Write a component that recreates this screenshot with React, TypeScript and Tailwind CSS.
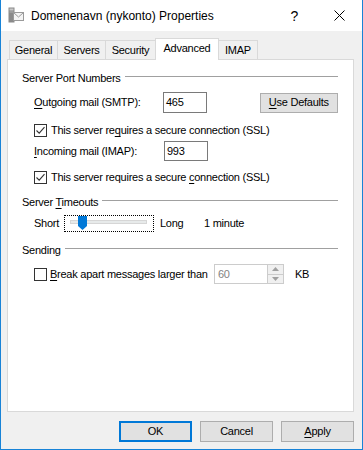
import type { ReactNode } from 'react'

const font = "font-['Liberation_Sans',Arial,sans-serif]"

function U({ children }: { children: ReactNode }) {
  return <span className="underline underline-offset-[2px] decoration-1">{children}</span>
}

function Check({ checked }: { checked: boolean }) {
  return (
    <span className="flex h-[13px] w-[13px] shrink-0 items-center justify-center border border-[#333333] bg-white">
      {checked && (
        <svg width="11" height="11" viewBox="0 0 11 11">
          <path d="M1.5 5.5 L4.2 8.2 L9.5 2.2" fill="none" stroke="#333333" strokeWidth="1.1" />
        </svg>
      )}
    </span>
  )
}

function Heading({ children }: { children: ReactNode }) {
  return (
    <div className="flex h-[16px] items-start">
      <span className="whitespace-nowrap leading-[16px]">{children}</span>
      <span className="ml-[4px] mt-[6px] h-px flex-1 bg-[#a0a0a0]" />
    </div>
  )
}

function WinButton({ children, primary }: { children: ReactNode; primary?: boolean }) {
  return (
    <button
      type="button"
      className={[
        'flex h-[21px] w-[73px] items-center justify-center bg-[#e1e1e1] leading-none',
        primary ? 'border-2 border-[#0078d7]' : 'border border-[#adadad]',
      ].join(' ')}
    >
      {children}
    </button>
  )
}

function AppIcon() {
  return (
    <svg width="17" height="17" viewBox="0 0 17 17">
      <rect x="0.5" y="0.5" width="6" height="15" fill="#8a8a8a" />
      <rect x="1.5" y="1.5" width="4" height="2" fill="#c8c8c8" />
      <rect x="1.5" y="4.5" width="4" height="1" fill="#b0b0b0" />
      <rect x="5.5" y="5.5" width="10" height="8" fill="#f4f4f4" stroke="#9a9a9a" />
      <path d="M5.5 5.5 L10.5 10 L15.5 5.5" fill="none" stroke="#9a9a9a" />
    </svg>
  )
}

export default function App() {
  const tabs = [
    { label: 'General', w: 'w-[49px]' },
    { label: 'Servers', w: 'w-[49px]' },
    { label: 'Security', w: 'w-[51px]' },
    { label: 'Advanced', w: 'w-[64px]', active: true },
    { label: 'IMAP', w: 'w-[40px]' },
  ]

  return (
    <div className={`${font} flex h-[450px] w-[363px] flex-col border-x border-b border-[#1883d7] bg-[#f0f0f0] text-[11px] tracking-[-0.25px] text-black`}>
      <div className="flex h-[31px] shrink-0 items-center bg-white">
        <span className="ml-[7px]">
          <AppIcon />
        </span>
        <span className="ml-[6px] text-[12px] tracking-normal">Domenenavn (nykonto) Properties</span>
        <span className="ml-auto mr-[36px] text-[14px] leading-none">?</span>
        <svg className="mr-[17px]" width="11" height="11" viewBox="0 0 11 11">
          <path d="M0.5 0.5 L10.5 10.5 M10.5 0.5 L0.5 10.5" stroke="#000" strokeWidth="1" />
        </svg>
      </div>

      <div className="flex flex-1 flex-col pl-[6px] pr-[8px] pt-[7px]">
        <div className="ml-[2px] flex h-[21px] items-end">
          {tabs.map((t, i) => (
            <div
              key={t.label}
              className={[
                'flex items-center justify-center border-x border-t border-[#d9d9d9]',
                t.w,
                i > 0 ? '-ml-px' : '',
                t.active ? 'relative z-10 -mb-px h-[22px] bg-white pb-[2px]' : 'h-[19px] bg-[#f0f0f0]',
              ].join(' ')}
            >
              {t.label}
            </div>
          ))}
        </div>

        <div className="h-[353px] border border-[#d9d9d9] bg-white pl-[14px] pr-[15px] pt-[10px]">
          <Heading>Server Port Numbers</Heading>
          <div className="ml-[12px]">
            <div className="mt-[6px] flex h-[21px] items-center">
              <span className="w-[130px]">
                <U>O</U>utgoing mail (SMTP):
              </span>
              <span className="flex h-[21px] w-[44px] items-center border border-[#7a7a7a] pl-[2px]">465</span>
              <span className="ml-[53px] flex h-[20px] w-[79px] items-center justify-center border border-[#adadad] bg-[#e1e1e1]">
                <U>U</U>se Defaults
              </span>
            </div>
            <div className="mt-[11px] flex h-[13px] items-center gap-[4px]">
              <Check checked />
              <span className="whitespace-nowrap">
                This server re<U>q</U>uires a secure connection (SSL)
              </span>
            </div>
            <div className="mt-[4px] flex h-[20px] items-center">
              <span className="w-[130px]">
                <U>I</U>ncoming mail (IMAP):
              </span>
              <span className="flex h-[20px] w-[44px] items-center border border-[#7a7a7a] pl-[2px]">993</span>
            </div>
            <div className="mt-[10px] flex h-[13px] items-center gap-[4px]">
              <Check checked />
              <span className="whitespace-nowrap">
                This server requires a secure <U>c</U>onnection (SSL)
              </span>
            </div>
          </div>

          <div className="mt-[10px]">
            <Heading>
              Server <U>T</U>imeouts
            </Heading>
          </div>
          <div className="ml-[12px] mt-[5px] flex h-[17px] items-center">
            <span className="w-[30px]">Short</span>
            <div className="relative h-[17px] w-[90px] border border-dotted border-black">
              <div className="absolute left-[5px] top-[4px] h-[4px] w-[77px] border border-[#d6d6d6] bg-[#e7eaea]" />
              <svg className="absolute left-[13px] top-0" width="9" height="14" viewBox="0 0 9 14">
                <path d="M0 0 H9 V10 L4.5 14 L0 10 Z" fill="#0078d7" />
              </svg>
            </div>
            <span className="ml-[6px] w-[44px]">Long</span>
            <span>1 minute</span>
          </div>

          <div className="mt-[10px]">
            <Heading>Sending</Heading>
          </div>
          <div className="ml-[12px] mt-[6px] flex h-[20px] items-center">
            <div className="flex w-[180px] items-center gap-[3px]">
              <Check checked={false} />
              <span className="whitespace-nowrap">
                <U>B</U>reak apart messages larger than
              </span>
            </div>
            <div className="flex h-[20px] w-[70px] border border-[#cccccc] bg-white">
              <span className="flex flex-1 items-center pl-[3px] text-[#838383]">60</span>
              <div className="flex w-[16px] flex-col border-l border-[#cccccc] bg-[#f0f0f0]">
                <div className="flex flex-1 items-center justify-center border-b border-[#cccccc]">
                  <svg width="7" height="4" viewBox="0 0 7 4">
                    <path d="M0 4 L3.5 0 L7 4 Z" fill="#a0a0a0" />
                  </svg>
                </div>
                <div className="flex flex-1 items-center justify-center">
                  <svg width="7" height="4" viewBox="0 0 7 4">
                    <path d="M0 0 L3.5 4 L7 0 Z" fill="#a0a0a0" />
                  </svg>
                </div>
              </div>
            </div>
            <span className="ml-[11px]">KB</span>
          </div>
        </div>

        <div className="mt-[9px] flex justify-end gap-[8px]">
          <WinButton primary>OK</WinButton>
          <WinButton>Cancel</WinButton>
          <WinButton>
            <U>A</U>pply
          </WinButton>
        </div>
      </div>
    </div>
  )
}
